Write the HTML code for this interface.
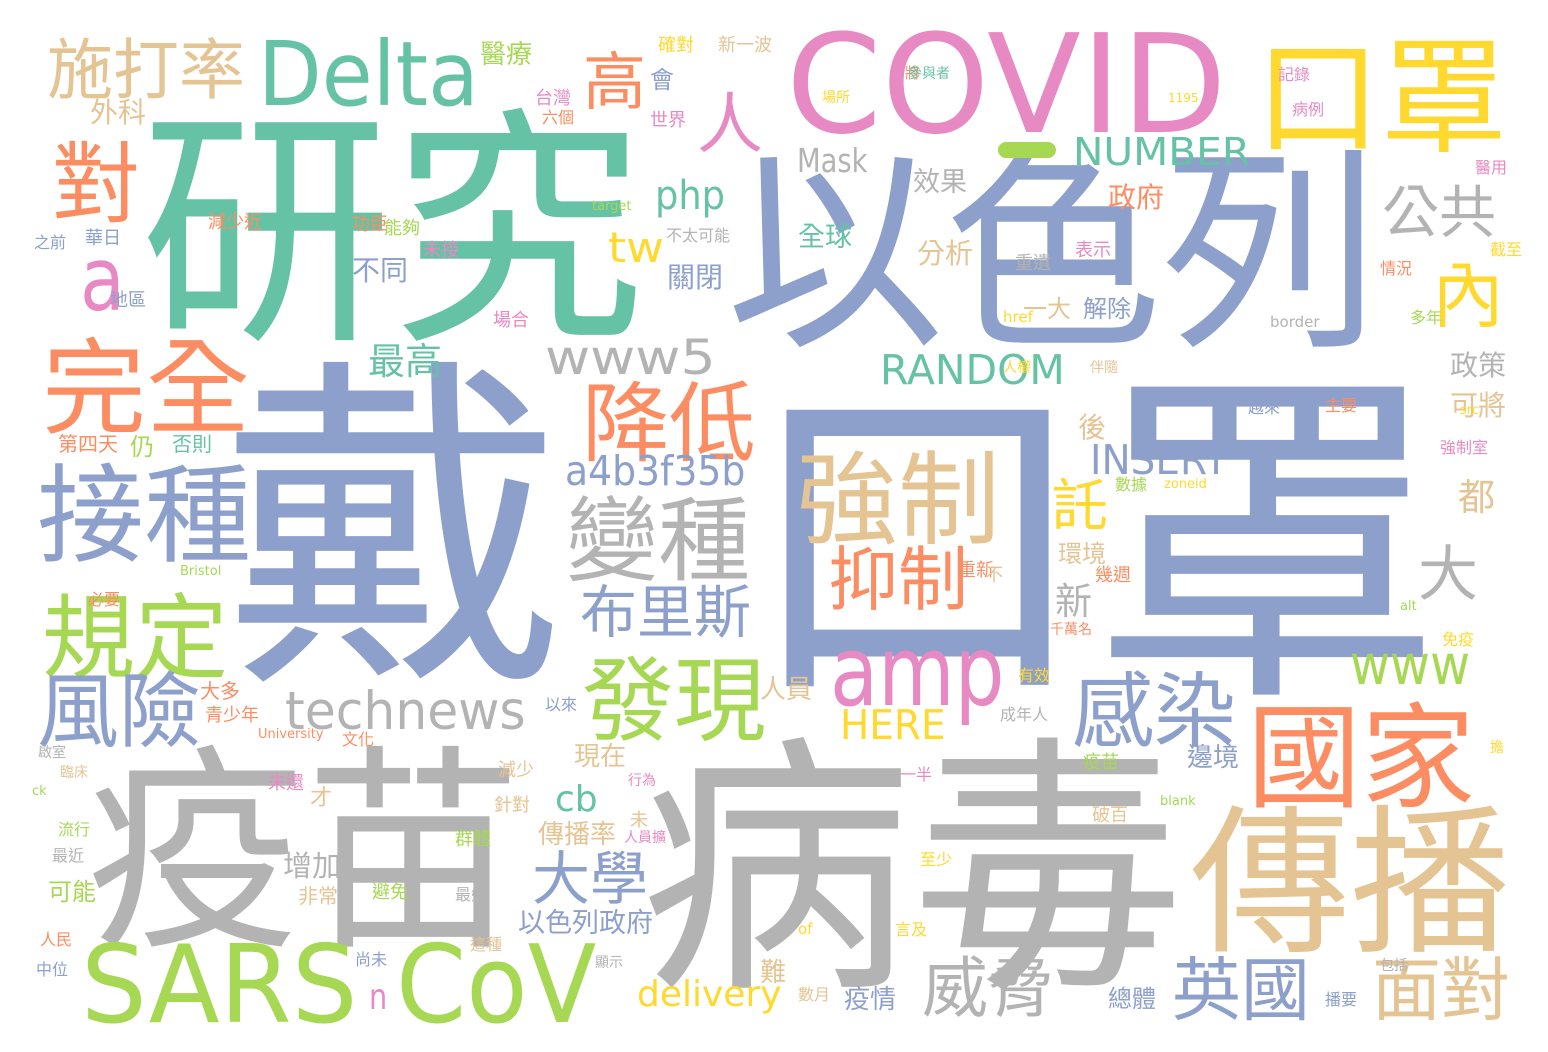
<!DOCTYPE html>
<html><head><meta charset="utf-8"><style>
html,body{margin:0;padding:0;background:#fff;}
#c{position:relative;width:1548px;height:1052px;overflow:hidden;background:#fff;font-family:"Liberation Sans","Noto Sans CJK TC",sans-serif;}
#c span{position:absolute;line-height:1;white-space:nowrap;font-family:"Noto Sans CJK TC","Liberation Sans",sans-serif;}
#c span.l{font-family:"DejaVu Sans",sans-serif;transform-origin:0 0;}
.t{color:#66c2a5}.o{color:#fc8d62}.b{color:#8da0cb}.p{color:#e78ac3}.g{color:#a6d854}.y{color:#ffd92f}.n{color:#e5c494}.r{color:#b3b3b3}
</style></head><body><div id="c">
<span class="b" style="left:222px;top:330px;font-size:345px">戴</span>
<span class="b" style="left:742px;top:340px;font-size:350px">口罩</span>
<span class="t" style="left:140px;top:85px;font-size:252px">研究</span>
<span class="b" style="left:726px;top:125px;font-size:218px">以色列</span>
<span class="r" style="left:86px;top:725px;font-size:218px">疫苗</span>
<span class="r" style="left:640px;top:712px;font-size:272px">病毒</span>
<span class="p l" style="left:786px;top:17px;font-size:137px">COVID</span>
<span class="y" style="left:1255px;top:25px;font-size:126px">口罩</span>
<span class="t l" style="left:258px;top:30px;font-size:89px;transform:scaleX(.93)">Delta</span>
<span class="n" style="left:47px;top:32px;font-size:66px">施打率</span>
<span class="o" style="left:583px;top:46px;font-size:63px">高</span>
<span class="o" style="left:52px;top:134px;font-size:88px">對</span>
<span class="p" style="left:697px;top:86px;font-size:66px">人</span>
<span class="p l" style="left:80px;top:236px;font-size:88px;transform:scaleX(.83)">a</span>
<span class="o" style="left:42px;top:328px;font-size:104px">完全</span>
<span class="b" style="left:37px;top:453px;font-size:107px">接種</span>
<span class="g" style="left:42px;top:584px;font-size:93px">規定</span>
<span class="b" style="left:37px;top:664px;font-size:82px">風險</span>
<span class="o" style="left:582px;top:374px;font-size:87px">降低</span>
<span class="n" style="left:796px;top:442px;font-size:102px">強制</span>
<span class="r" style="left:566px;top:488px;font-size:92px">變種</span>
<span class="o" style="left:828px;top:540px;font-size:70px">抑制</span>
<span class="b" style="left:580px;top:580px;font-size:57px">布里斯</span>
<span class="g" style="left:582px;top:648px;font-size:92px">發現</span>
<span class="p l" style="left:830px;top:623px;font-size:97px;transform:scaleX(.81)">amp</span>
<span class="b" style="left:1072px;top:664px;font-size:82px">感染</span>
<span class="o" style="left:1247px;top:692px;font-size:114px">國家</span>
<span class="n" style="left:1190px;top:790px;font-size:160px">傳播</span>
<span class="y" style="left:1432px;top:254px;font-size:72px">內</span>
<span class="r" style="left:1382px;top:180px;font-size:57px">公共</span>
<span class="r" style="left:1418px;top:540px;font-size:60px">大</span>
<span class="r l" style="left:545px;top:334px;font-size:48px;transform:scaleX(1.15)">www5</span>
<span class="b l" style="left:565px;top:451px;font-size:41px;transform:scaleX(.92)">a4b3f35b</span>
<span class="r l" style="left:285px;top:685px;font-size:53px;transform:scaleX(.95)">technews</span>
<span class="g l" style="left:81px;top:932px;font-size:108px;transform:scaleX(.96)">SARS</span>
<span class="g l" style="left:396px;top:932px;font-size:108px;transform:scaleX(.93)">CoV</span>
<span class="p l" style="left:369px;top:980px;font-size:36px;transform:scaleX(.8)">n</span>
<span class="r" style="left:922px;top:950px;font-size:66px">威脅</span>
<span class="b" style="left:1172px;top:950px;font-size:69px">英國</span>
<span class="n" style="left:1372px;top:950px;font-size:69px">面對</span>
<span class="b" style="left:532px;top:845px;font-size:58px">大學</span>
<span class="t l" style="left:880px;top:350px;font-size:41px">RANDOM</span>
<span class="b l" style="left:1090px;top:440px;font-size:41px;transform:scaleX(.95)">INSERT</span>
<span class="t l" style="left:1073px;top:133px;font-size:38px;transform:scaleX(1.07)">NUMBER</span>
<span class="y l" style="left:840px;top:705px;font-size:41px;transform:scaleX(.95)">HERE</span>
<span class="g l" style="left:1350px;top:638px;font-size:55px;transform:scaleX(.89)">www</span>
<span class="y l" style="left:637px;top:977px;font-size:36px">delivery</span>
<span class="t l" style="left:655px;top:176px;font-size:40px;transform:scaleX(.92)">php</span>
<span class="y l" style="left:608px;top:227px;font-size:42px;transform:scaleX(1.1)">tw</span>
<span class="r l" style="left:797px;top:144px;font-size:33px;transform:scaleX(.83)">Mask</span>
<span class="t" style="left:368px;top:340px;font-size:37px">最高</span>
<span class="y" style="left:1052px;top:474px;font-size:56px">託</span>
<span class="n" style="left:1458px;top:476px;font-size:37px">都</span>
<span class="t l" style="left:555px;top:782px;font-size:36px">cb</span>
<span class="r" style="left:283px;top:850px;font-size:29px">增加</span>
<span class="b" style="left:518px;top:907px;font-size:27px">以色列政府</span>
<span class="r" style="left:913px;top:166px;font-size:27px">效果</span>
<span class="t" style="left:798px;top:221px;font-size:27px">全球</span>
<span class="g" style="left:480px;top:40px;font-size:26px">醫療</span>
<span class="n" style="left:90px;top:97px;font-size:28px">外科</span>
<span class="b" style="left:352px;top:255px;font-size:28px">不同</span>
<span class="b" style="left:667px;top:262px;font-size:28px">關閉</span>
<span class="o" style="left:1108px;top:182px;font-size:28px">政府</span>
<span class="n" style="left:917px;top:238px;font-size:28px">分析</span>
<span class="r" style="left:1450px;top:350px;font-size:28px">政策</span>
<span class="n" style="left:1450px;top:390px;font-size:28px">可將</span>
<span class="n" style="left:1078px;top:412px;font-size:28px">後</span>
<span class="r" style="left:1055px;top:580px;font-size:37px">新</span>
<span class="n" style="left:1058px;top:540px;font-size:24px">環境</span>
<span class="b" style="left:1187px;top:743px;font-size:26px">邊境</span>
<span class="n" style="left:574px;top:742px;font-size:26px">現在</span>
<span class="n" style="left:538px;top:820px;font-size:26px">傳播率</span>
<span class="n" style="left:760px;top:958px;font-size:26px">難</span>
<span class="b" style="left:844px;top:985px;font-size:26px">疫情</span>
<span class="n" style="left:760px;top:675px;font-size:26px">人員</span>
<span class="b" style="left:1108px;top:985px;font-size:24px">總體</span>
<span class="n" style="left:1023px;top:295px;font-size:24px">一大</span>
<span class="b" style="left:1083px;top:295px;font-size:24px">解除</span>
<span class="o" style="left:200px;top:680px;font-size:20px">大多</span>
<span class="o" style="left:205px;top:705px;font-size:18px">青少年</span>
<span class="g" style="left:48px;top:878px;font-size:24px">可能</span>
<span class="n" style="left:298px;top:885px;font-size:20px">非常</span>
<span class="n" style="left:310px;top:785px;font-size:22px">才</span>
<span class="g" style="left:130px;top:433px;font-size:24px">仍</span>
<span class="t" style="left:172px;top:433px;font-size:20px">否則</span>
<span class="o" style="left:58px;top:433px;font-size:20px">第四天</span>
<span class="b" style="left:34px;top:233px;font-size:16px">之前</span>
<span class="b" style="left:85px;top:228px;font-size:18px">華日</span>
<span class="b" style="left:110px;top:290px;font-size:18px">地區</span>
<span class="o" style="left:208px;top:212px;font-size:18px">減少近</span>
<span class="o" style="left:352px;top:214px;font-size:18px">功臣</span>
<span class="g" style="left:384px;top:218px;font-size:18px">能夠</span>
<span class="p" style="left:423px;top:240px;font-size:18px">未接</span>
<span class="p" style="left:493px;top:310px;font-size:18px">場合</span>
<span class="p" style="left:535px;top:88px;font-size:18px">台灣</span>
<span class="o" style="left:542px;top:108px;font-size:16px">六個</span>
<span class="y" style="left:658px;top:35px;font-size:18px">確對</span>
<span class="n" style="left:718px;top:35px;font-size:18px">新一波</span>
<span class="p" style="left:650px;top:110px;font-size:18px">世界</span>
<span class="b" style="left:650px;top:66px;font-size:24px">會</span>
<span class="r l" style="left:1270px;top:315px;font-size:15px">border</span>
<span class="y l" style="left:1003px;top:310px;font-size:15px">href</span>
<span class="g l" style="left:592px;top:200px;font-size:13px">target</span>
<span class="r" style="left:666px;top:226px;font-size:16px">不太可能</span>
<span class="n" style="left:1092px;top:805px;font-size:18px">破百</span>
<span class="r" style="left:1000px;top:705px;font-size:16px">成年人</span>
<span class="y" style="left:1018px;top:666px;font-size:16px">有效</span>
<span class="g" style="left:1083px;top:752px;font-size:18px">疫苗</span>
<span class="o l" style="left:258px;top:728px;font-size:13px">University</span>
<span class="o" style="left:342px;top:730px;font-size:16px">文化</span>
<span class="g l" style="left:180px;top:565px;font-size:13px">Bristol</span>
<span class="o" style="left:88px;top:590px;font-size:16px">必要</span>
<span class="g" style="left:58px;top:820px;font-size:16px">流行</span>
<span class="r" style="left:52px;top:846px;font-size:16px">最近</span>
<span class="g" style="left:455px;top:829px;font-size:18px">群體</span>
<span class="g" style="left:372px;top:882px;font-size:18px">避免</span>
<span class="r" style="left:455px;top:885px;font-size:16px">最好</span>
<span class="n" style="left:470px;top:935px;font-size:16px">這種</span>
<span class="b" style="left:355px;top:950px;font-size:16px">尚未</span>
<span class="o" style="left:40px;top:930px;font-size:16px">人民</span>
<span class="p" style="left:268px;top:773px;font-size:18px">未還</span>
<span class="n" style="left:498px;top:760px;font-size:18px">減少</span>
<span class="n" style="left:494px;top:795px;font-size:18px">針對</span>
<span class="y" style="left:1442px;top:630px;font-size:16px">免疫</span>
<span class="r" style="left:1015px;top:253px;font-size:18px">重遺</span>
<span class="p" style="left:1075px;top:240px;font-size:18px">表示</span>
<span class="g" style="left:1115px;top:475px;font-size:16px">數據</span>
<span class="y l" style="left:1164px;top:478px;font-size:13px">zoneid</span>
<span class="g l" style="left:1400px;top:600px;font-size:13px">alt</span>
<span class="y l" style="left:1460px;top:404px;font-size:13px">src</span>
<span class="p" style="left:1440px;top:438px;font-size:16px">強制室</span>
<span class="g" style="left:1410px;top:308px;font-size:16px">多年</span>
<span class="o" style="left:1380px;top:259px;font-size:16px">情況</span>
<span class="y" style="left:1490px;top:240px;font-size:16px">截至</span>
<span class="p" style="left:1475px;top:158px;font-size:16px">醫用</span>
<span class="p" style="left:1278px;top:65px;font-size:16px">記錄</span>
<span class="p" style="left:1292px;top:100px;font-size:16px">病例</span>
<span class="o" style="left:1325px;top:396px;font-size:16px">主要</span>
<span class="b" style="left:1248px;top:398px;font-size:16px">越來</span>
<span class="o" style="left:958px;top:560px;font-size:18px">重新</span>
<span class="n" style="left:985px;top:565px;font-size:18px">不</span>
<span class="o" style="left:1095px;top:565px;font-size:18px">幾週</span>
<span class="o" style="left:1050px;top:622px;font-size:14px">千萬名</span>
<span class="r" style="left:1380px;top:958px;font-size:14px">包括</span>
<span class="b" style="left:1325px;top:990px;font-size:16px">播要</span>
<span class="y" style="left:1490px;top:740px;font-size:14px">擔</span>
<span class="y" style="left:895px;top:920px;font-size:16px">言及</span>
<span class="y l" style="left:798px;top:922px;font-size:15px">of</span>
<span class="g l" style="left:1160px;top:795px;font-size:13px">blank</span>
<span class="y" style="left:920px;top:850px;font-size:16px">至少</span>
<span class="p" style="left:624px;top:830px;font-size:14px">人員擴</span>
<span class="n" style="left:630px;top:810px;font-size:18px">未</span>
<span class="p" style="left:900px;top:765px;font-size:16px">一半</span>
<span class="p" style="left:628px;top:773px;font-size:14px">行為</span>
<span class="n" style="left:798px;top:985px;font-size:16px">數月</span>
<span class="r" style="left:595px;top:955px;font-size:14px">顯示</span>
<span class="y" style="left:1003px;top:360px;font-size:14px">人權</span>
<span class="n" style="left:1090px;top:360px;font-size:14px">伴隨</span>
<span class="b" style="left:545px;top:695px;font-size:16px">以來</span>
<span class="b" style="left:36px;top:960px;font-size:16px">中位</span>
<span class="g l" style="left:32px;top:785px;font-size:13px">ck</span>
<span class="n" style="left:60px;top:765px;font-size:14px">臨床</span>
<span class="r" style="left:38px;top:745px;font-size:14px">啟室</span>
<span class="o" style="left:905px;top:65px;font-size:15px">將</span>
<span class="y" style="left:822px;top:90px;font-size:14px">場所</span>
<span class="t" style="left:908px;top:66px;font-size:14px">參與者</span>
<span class="y l" style="left:1168px;top:92px;font-size:12px">1195</span>
<div style="position:absolute;left:998px;top:142px;width:58px;height:16px;border-radius:8px;background:#a6d854"></div>
</div></body></html>
